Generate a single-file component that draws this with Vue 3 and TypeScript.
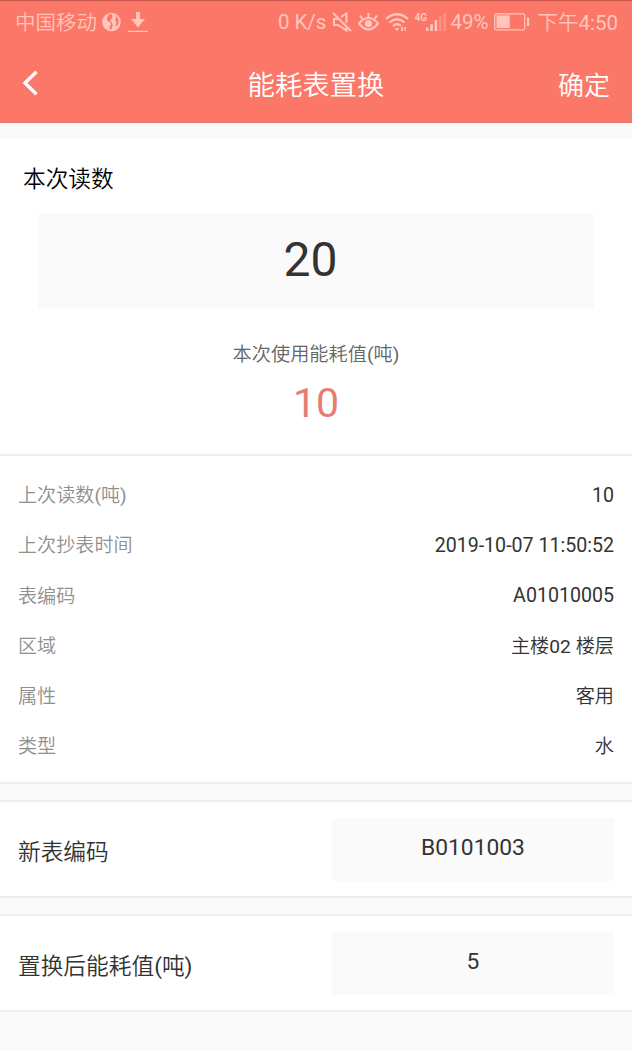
<script setup lang="ts">
import { h, ref, type FunctionalComponent } from 'vue'

interface Detail {
  label: string
  value: string
  han?: boolean
}

const reading = ref('20')
const usage = ref('10')
const newCode = ref('B0101003')
const replacedValue = ref('5')

const details: Detail[] = [
  { label: '上次读数(吨)', value: '10' },
  { label: '上次抄表时间', value: '2019-10-07 11:50:52' },
  { label: '表编码', value: 'A01010005' },
  { label: '区域', value: '主楼02 楼层', han: true },
  { label: '属性', value: '客用', han: true },
  { label: '类型', value: '水', han: true },
]

// Sets Chinese runs in a lighter weight than the Latin text around them.
const MixedText: FunctionalComponent<{ text: string }> = (props) =>
  h(
    'span',
    props.text
      .split(/([\u4e00-\u9fff]+)/)
      .filter(Boolean)
      .map((run) => (/[\u4e00-\u9fff]/.test(run) ? h('span', { class: 'han-run' }, run) : run)),
  )
MixedText.props = ['text']
</script>

<template>
  <div class="page">
    <header class="top">
      <div class="status">
        <MixedText class="carrier" text="中国移动" />
        <svg class="globe" width="19" height="20" viewBox="0 0 19 20">
          <circle cx="9.5" cy="10" r="9.3" fill="currentColor" />
          <path class="land" d="M8.5 1.8 6.5 3 4.8 6.5 5.5 9 8.5 10.5 9 12.5 7.5 15 8.2 17.8 9.5 17 10.8 13.5 9.8 10.5 8 8.5 10.5 6 10.2 3ZM13 3 14.3 5 13.2 8 14.4 10.5 13.6 13.5 14.6 14.3 16.4 11.5 16.4 7.5 15 4.5Z" />
        </svg>
        <svg class="download" width="20" height="20" viewBox="0 0 20 20" fill="currentColor">
          <path d="M8 0H12V7H17L10 15.5 3 7H8ZM0 18.8H20V20H0Z" />
        </svg>
        <span class="speed">0 K/s</span>
        <svg class="mute" width="20" height="20" viewBox="0 0 20 20" fill="none" stroke="currentColor" stroke-width="2">
          <path d="M1 1 19 19M7 7H2V13H6L14.5 18.5V14M9 5 14.5 1.5V11" />
        </svg>
        <svg class="eye" width="21" height="20" viewBox="0 0 21 20" fill="none" stroke="currentColor" stroke-width="2.1">
          <path d="M1 11.5Q5.5 6 10.5 6T20 11.5Q15.5 17.5 10.5 17.5T1 11.5ZM10.5 6V1M4.5 7 2 3.5M16.5 7 19 3.5" />
          <circle cx="10.5" cy="11.6" r="3.7" fill="currentColor" stroke="none" />
        </svg>
        <svg class="wifi" width="24" height="19" viewBox="0 0 24 19" fill="none" stroke="currentColor" stroke-width="2.2">
          <path d="M1 6Q12-3.5 23 6M4.5 9.5Q12 3 19.5 9.5M8 13Q12 9.2 16 13" />
          <path d="M9.8 15H14.2L12 18.2ZM16.2 14H18V18H16.2ZM19.3 14H20.8V18H19.3Z" fill="currentColor" stroke="none" />
        </svg>
        <div class="cell">
          <span class="gen">4G</span>
          <svg width="21" height="18" viewBox="0 0 21 18" fill="currentColor">
            <path d="M0 14.5H2.5V18H0ZM4.2 11H6.8V18H4.2ZM8.6 7H11.2V18H8.6Z" />
            <path opacity=".35" d="M13 3.5H15.6V18H13ZM17.3 0H20V18H17.3Z" />
          </svg>
        </div>
        <span class="percent">49%</span>
        <svg class="battery" width="36" height="18" viewBox="0 0 36 18">
          <rect x=".7" y=".8" width="30" height="16" rx="1.5" fill="none" stroke="currentColor" stroke-width="1.3" />
          <path d="M2.5 2.5H15.7V15H2.5ZM33 4.5H35.2V13H33Z" fill="currentColor" />
        </svg>
        <MixedText class="clock" text="下午4:50" />
      </div>
      <nav class="nav">
        <svg class="back" width="16" height="26" viewBox="0 0 16 26" fill="none" stroke="#fff" stroke-width="3.4">
          <path d="M14.5 1.8 3 13 14.5 24.2" />
        </svg>
        <h1><MixedText text="能耗表置换" /></h1>
        <MixedText class="confirm" text="确定" />
      </nav>
    </header>

    <section class="reading">
      <h2><MixedText text="本次读数" /></h2>
      <div class="reading-box">{{ reading }}</div>
      <p class="usage-label"><MixedText text="本次使用能耗值(吨)" /></p>
      <p class="usage">{{ usage }}</p>
    </section>

    <section class="details">
      <div v-for="item in details" :key="item.label" class="row">
        <MixedText class="label" :text="item.label" />
        <MixedText class="value" :class="{ han: item.han }" :text="item.value" />
      </div>
    </section>

    <section class="field">
      <MixedText class="name" text="新表编码" />
      <div class="field-box">{{ newCode }}</div>
    </section>
    <section class="field">
      <MixedText class="name" text="置换后能耗值(吨)" />
      <div class="field-box">{{ replacedValue }}</div>
    </section>
  </div>
</template>

<style>
body {
  margin: 0;
  background: #fafafa;
}
.han-run {
  font-weight: 350;
}
</style>

<style scoped>
.page {
  min-height: 1051px;
  box-sizing: border-box;
  background: #fafafa;
  color: #333;
  font-family: Roboto, 'Noto Sans CJK SC', sans-serif;
  font-weight: 400;
}
h1, h2, p {
  margin: 0;
  font-weight: 400;
}
.top {
  height: 123px;
  box-sizing: border-box;
  border-top: 1px solid #c9584c;
  border-bottom: 1px solid #e8766a;
  background: #fb7868;
  color: #ffc5ba;
}
.status {
  display: flex;
  align-items: center;
  height: 42px;
  padding: 0 14px 0 15px;
  font-size: 20.5px;
  line-height: 42px;
  white-space: nowrap;
}
.status svg {
  flex: none;
  display: block;
}
.carrier {
  width: 87px;
  padding-top: 1px;
}
.land { fill: #fb7868; }
.download { margin-left: 7px; }
.speed { margin-left: auto; }
.mute { margin-left: 6px; }
.eye { margin-left: 6px; }
.wifi { margin-left: 6px; }
.cell {
  display: flex;
  margin-left: 5px;
}
.gen {
  width: 12px;
  font-size: 10px;
  font-weight: 700;
  line-height: 9px;
}
.percent { margin-left: 3px; }
.battery { margin-left: 6px; }
.clock { margin-left: 7px; padding-top: 1px; }
.nav {
  display: grid;
  grid-template-columns: 1fr auto 1fr;
  align-items: center;
  height: 79px;
  padding: 0 22px;
  color: #fff;
}
h1 {
  padding-top: 6px;
  font-size: 27.4px;
  line-height: 40px;
}
.confirm {
  justify-self: end;
  padding-top: 6px;
  font-size: 26px;
  line-height: 40px;
}
.reading {
  height: 317px;
  box-sizing: border-box;
  margin-top: 16px;
  padding-top: 26px;
  border-bottom: 2px solid #eee;
  background: #fff;
  text-align: center;
}
h2 {
  padding-left: 23px;
  color: #000;
  font-size: 22.7px;
  line-height: 30px;
  text-align: left;
}
.reading-box {
  height: 95px;
  box-sizing: border-box;
  margin: 18px 38px 0;
  padding-right: 11px;
  background: #fafafa;
  font-size: 48px;
  line-height: 94px;
}
.usage-label {
  margin-top: 33px;
  color: #666;
  font-size: 19.2px;
  line-height: 28px;
}
.usage {
  margin-top: 9px;
  color: #e57d72;
  font-size: 41px;
  line-height: 50px;
}
.details {
  height: 328px;
  box-sizing: border-box;
  padding: 14px 18px 0;
  border-bottom: 2px solid #eee;
  background: #fff;
}
.row {
  display: flex;
  justify-content: space-between;
  height: 50.3px;
  font-size: 19.1px;
  line-height: 50px;
}
.label {
  padding-top: 1px;
  color: #8f8f8f;
}
.value {
  padding-top: .5px;
  font-size: 19.6px;
}
.value.han {
  padding-top: 1px;
  font-size: 19.2px;
}
.field {
  display: flex;
  align-items: center;
  justify-content: space-between;
  height: 98px;
  box-sizing: border-box;
  margin-top: 16px;
  padding: 0 18px;
  border-top: 2px solid #eee;
  border-bottom: 2px solid #eee;
  background: #fff;
  font-size: 22.7px;
}
.name { padding-top: 2px; }
.field-box {
  width: 282px;
  height: 63px;
  background: #fafafa;
  font-size: 22.8px;
  line-height: 60px;
  text-align: center;
}
</style>
